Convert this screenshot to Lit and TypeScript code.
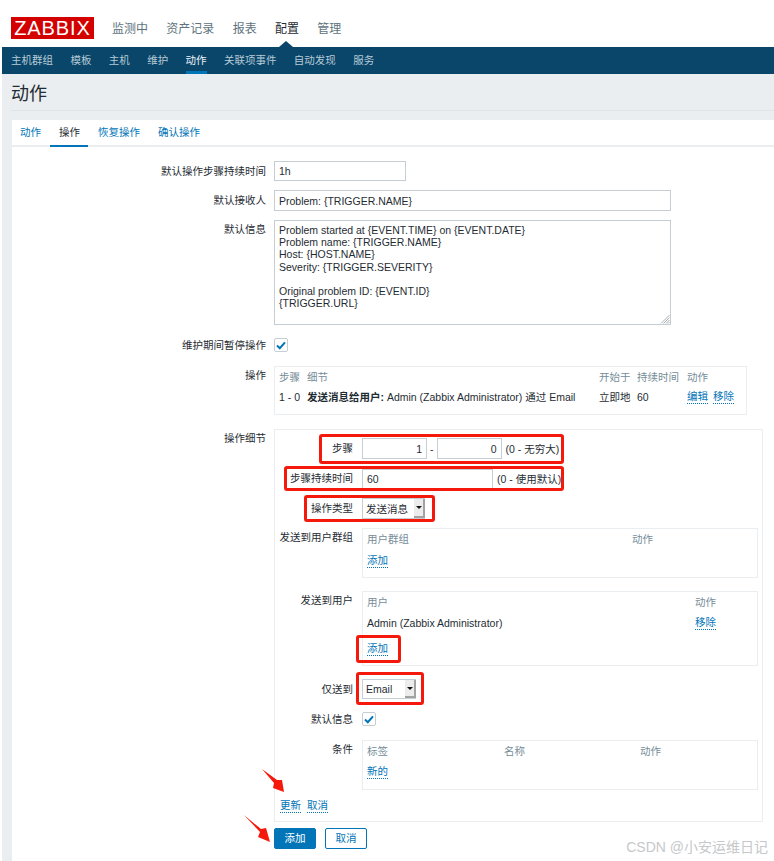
import { LitElement, html, css } from "lit";
import { customElement } from "lit/decorators.js";

const check = html`<span class="check"><svg width="10" height="9" viewBox="0 0 10 9"><path d="M1 4.6 L3.8 7.2 L9 1.4" fill="none" stroke="#0275b8" stroke-width="2"/></svg></span>`;
const arrow = html`<i class="sel-btn"><b></b></i>`;

@customElement("app-root")
export class AppRoot extends LitElement {
  static styles = css`
    :host { display: block; position: relative; width: 774px; height: 861px; overflow: hidden; background: #fff;
      font: 10.5px/14px "Liberation Sans", "Noto Sans CJK SC", sans-serif; color: #1f2c33; }
    * { box-sizing: border-box; }
    .top { display: flex; align-items: flex-start; height: 47px; padding: 17px 0 0 11px; }
    .logo { width: 83px; height: 22px; background: #d40000; color: #fff; font-size: 20px; line-height: 23px; text-align: center; letter-spacing: .9px; }
    .main { display: flex; gap: 18.3px; margin-left: 18px; font-size: 12px; color: #5e737e; line-height: 24px; }
    .main .on { color: #1f2c33; }
    .sub { position: relative; margin-left: 2px; height: 27px; background: #0a466a; display: flex; gap: 17.4px; padding-left: 9px; color: #b7cbd6; line-height: 26px; }
    .sub::before { content: ""; position: absolute; left: 277px; top: -6px; border: 7px solid transparent; border-top: 0; border-bottom: 6px solid #0a466a; }
    .sub .on { color: #eef4f8; box-shadow: inset 0 -3px #0275b8; height: 27px; }
    .page { margin-left: 2px; background: #ebeef0; height: 787px; padding-left: 10px; }
    .title { height: 37px; margin-left: -1px; font-size: 18px; line-height: 41px; border-bottom: 1px solid #dfe4e7; }
    .card { margin-top: 9px; background: #fff; height: 741px; }
    .tabs { display: flex; height: 27px; padding-left: 8px; border-bottom: 2px solid #ebeef0; color: #0275b8; line-height: 25px; gap: 18px; }
    .tabs .on { position: relative; color: #1f2c33; }
    .tabs .on::after { content: ""; position: absolute; left: -9px; right: -8px; bottom: -2px; height: 2px; background: #0275b8; }
    .form { display: grid; grid-template-columns: 254px 1fr; column-gap: 8px; padding-top: 14px; align-items: start; }
    .lab { text-align: right; line-height: 20px; color: #1f2c33; }
    .lab.l18 { line-height: 18px; }
    .lab.l14 { line-height: 14px; }
    .field { margin-bottom: 9px; }
    input, textarea { display: block; font: inherit; color: inherit; border: 1px solid #c4ced3; background: #fff; padding: 0 4px; outline: none; border-radius: 0; }
    .w1 { width: 132px; height: 20px; }
    .w2 { width: 397px; height: 21px; }
    .ta { position: relative; width: 397px; height: 105px; margin-bottom: 13px; }
    textarea { width: 397px; height: 105px; line-height: 12.2px; padding-top: 3px; resize: none; overflow: hidden; }
    .grip { position: absolute; right: 1px; bottom: 1px; }
    .check { display: flex; align-items: center; justify-content: center; width: 14px; height: 14px; border: 1px solid #c4ced3; border-radius: 2px; background: #fff; }
    .mb14 { margin-bottom: 14px; }
    .box { border: 1px solid #ebeef0; background: #fff; }
    .ops { width: 473px; height: 49px; padding: 0 0 0 4px; margin-bottom: 14px; }
    .tr { display: grid; align-items: center; height: 20px; }
    .ops .tr { grid-template-columns: 28px 292px 38px 50px 26px 26px; }
    .th { color: #768d99; }
    a { color: #0275b8; text-decoration: none; border-bottom: 1px dotted #0275b8; justify-self: start; line-height: 13px; }
    .details { width: 489px; height: 393px; padding: 8px 4px 0; }
    .dgrid { display: grid; grid-template-columns: 74px 1fr; column-gap: 9px; align-items: start; }
    .inl { display: flex; align-items: center; gap: 3px; height: 21px; }
    .inl.short { height: 20px; }
    .inl .note { margin-left: 1px; }
    .num { width: 65px; height: 21px; text-align: right; }
    .dur { width: 131px; height: 20px; }
    .mb-10 { margin-bottom: 10px; } .mb-9 { margin-bottom: 9px; } .mb-13 { margin-bottom: 13px; }
    .sel { display: flex; align-items: center; justify-content: space-between; border: 1px solid #c4ced3; border-right: 0; background: #fff; padding: 0 0 0 3px; }
    .s1 { width: 63px; height: 21px; } .s2 { width: 54px; height: 20px; }
    .sel-btn { display: flex; align-items: center; justify-content: center; width: 11px; height: 100%; background: #ececec; border-right: 2px solid #a3a3a3; border-bottom: 2px solid #a3a3a3; }
    .sel-btn b { border: 3px solid transparent; border-top: 3px solid #111; border-bottom: 0; }
    .tbox { width: 396px; padding: 0 0 0 4px; }
    .tbox .tr { height: 21px; }
    .tbox .tr.th { height: 20px; }
    .g { height: 50px; } .g .tr { grid-template-columns: 265px 1fr; }
    .g .tr.th { margin-bottom: 1px; }
    .u { height: 75px; } .u .tr { grid-template-columns: 328px 1fr; }
    .u .tr.gap { margin-top: 5px; }
    .c { height: 50px; } .c .tr { grid-template-columns: 137px 136px 1fr; }
    .links { display: flex; gap: 6px; margin-top: 9px; padding-left: 1px; }
    .btns { display: flex; gap: 9px; margin-top: 6px; grid-column: 2; }
    .btn { width: 42px; height: 21px; border: 1px solid #0275b8; border-radius: 2px; text-align: center; line-height: 19px; color: #0275b8; background: #fff; }
    .btn.pri { background: #0275b8; color: #fff; }
    .red { position: absolute; border: 3px solid #f5190c; border-radius: 3px; pointer-events: none; }
    .r1 { left: 319px; top: 434px; width: 245px; height: 30px; }
    .r2 { left: 284px; top: 466px; width: 280px; height: 25px; }
    .r3 { left: 304px; top: 495px; width: 131px; height: 27px; }
    .r4 { left: 356px; top: 635px; width: 45px; height: 28px; }
    .r5 { left: 356px; top: 672px; width: 68px; height: 33px; }
    .arrows { position: absolute; left: 0; top: 0; pointer-events: none; }
    .wm { position: absolute; right: 6px; top: 838px; font-size: 14px; line-height: 18px; color: #c6c8ca; }
  `;

  render() {
    return html`
      <div class="top">
        <div class="logo">ZABBIX</div>
        <nav class="main"><span>监测中</span><span>资产记录</span><span>报表</span><span class="on">配置</span><span>管理</span></nav>
      </div>
      <nav class="sub"><span>主机群组</span><span>模板</span><span>主机</span><span>维护</span><span class="on">动作</span><span>关联项事件</span><span>自动发现</span><span>服务</span></nav>
      <div class="page">
        <div class="title">动作</div>
        <div class="card">
          <div class="tabs"><span>动作</span><span class="on">操作</span><span>恢复操作</span><span>确认操作</span></div>
          <div class="form">
            <div class="lab">默认操作步骤持续时间</div><div class="field"><input class="w1" value="1h" /></div>
            <div class="lab">默认接收人</div><div class="field"><input class="w2" value="Problem: {TRIGGER.NAME}" /></div>
            <div class="lab l18">默认信息</div>
            <div class="ta">
              <textarea .value=${"Problem started at {EVENT.TIME} on {EVENT.DATE}\nProblem name: {TRIGGER.NAME}\nHost: {HOST.NAME}\nSeverity: {TRIGGER.SEVERITY}\n\nOriginal problem ID: {EVENT.ID}\n{TRIGGER.URL}"}></textarea>
              <svg class="grip" width="10" height="10" viewBox="0 0 10 10"><path d="M9.5 1 L1 9.5 M9.5 3.5 L3.5 9.5 M9.5 6 L6 9.5 M9.5 8 L8 9.5" stroke="#a9b0b4" stroke-width="1" fill="none"/></svg>
            </div>
            <div class="lab l14">维护期间暂停操作</div><div class="mb14">${check}</div>
            <div class="lab l18">操作</div>
            <div class="box ops">
              <div class="tr th"><span>步骤</span><span>细节</span><span>开始于</span><span>持续时间</span><span>动作</span></div>
              <div class="tr"><span>1 - 0</span><span><b>发送消息给用户:</b> Admin (Zabbix Administrator) 通过 Email</span><span>立即地</span><span>60</span><a>编辑</a><a>移除</a></div>
            </div>
            <div class="lab l18">操作细节</div>
            <div class="box details">
              <div class="dgrid">
                <div class="lab">步骤</div>
                <div class="inl mb-10"><input class="num" value="1" /><span>-</span><input class="num" value="0" /><span class="note">(0 - 无穷大)</span></div>
                <div class="lab l18">步骤持续时间</div>
                <div class="inl short mb-9"><input class="dur" value="60" /><span class="note">(0 - 使用默认)</span></div>
                <div class="lab">操作类型</div>
                <div class="mb-9"><div class="sel s1"><span>发送消息</span>${arrow}</div></div>
                <div class="lab l18">发送到用户群组</div>
                <div class="box tbox g mb-13">
                  <div class="tr th"><span>用户群组</span><span>动作</span></div>
                  <div class="tr"><a>添加</a></div>
                </div>
                <div class="lab l18">发送到用户</div>
                <div class="box tbox u mb-13">
                  <div class="tr th"><span>用户</span><span>动作</span></div>
                  <div class="tr"><span>Admin (Zabbix Administrator)</span><a>移除</a></div>
                  <div class="tr gap"><a>添加</a></div>
                </div>
                <div class="lab">仅送到</div>
                <div class="mb-13"><div class="sel s2"><span>Email</span>${arrow}</div></div>
                <div class="lab l14">默认信息</div>
                <div class="mb14">${check}</div>
                <div class="lab l18">条件</div>
                <div class="box tbox c">
                  <div class="tr th"><span>标签</span><span>名称</span><span>动作</span></div>
                  <div class="tr"><a>新的</a></div>
                </div>
              </div>
              <div class="links"><a>更新</a><a>取消</a></div>
            </div>
            <div class="btns"><div class="btn pri">添加</div><div class="btn">取消</div></div>
          </div>
        </div>
      </div>
      <div class="red r1"></div><div class="red r2"></div><div class="red r3"></div><div class="red r4"></div><div class="red r5"></div>
      <svg class="arrows" width="774" height="861">
        <path d="M262 769 L277 780 L282 780 L284 792 L273 788 L274 783 Z" fill="#f5190c"/>
        <path d="M244 815 L261 829 L266 828 L270 842 L258 837 L260 832 Z" fill="#f5190c"/>
      </svg>
      <div class="wm">CSDN @小安运维日记</div>
    `;
  }
}
